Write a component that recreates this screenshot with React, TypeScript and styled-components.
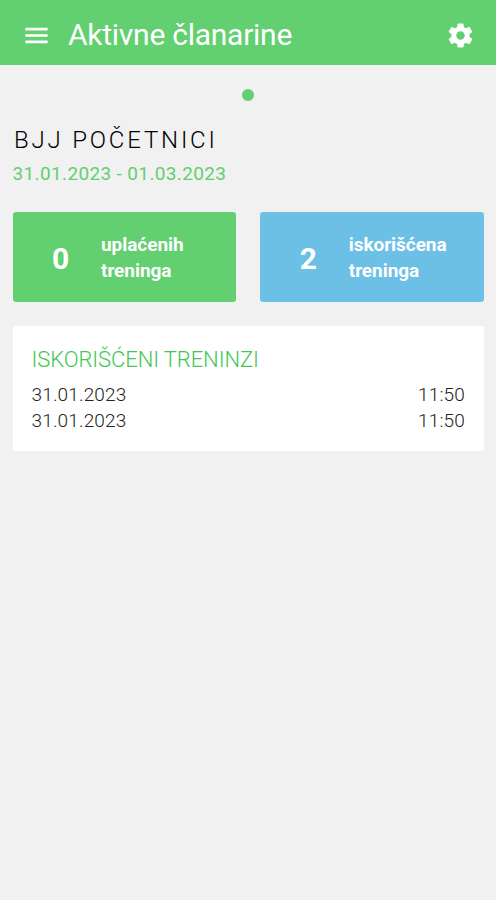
import React from "react";
import styled, { createGlobalStyle } from "styled-components";

const GlobalStyle = createGlobalStyle`
  * { box-sizing: border-box; }
  body { margin: 0; background: #f1f1f1; font-family: Roboto, sans-serif; }
`;

const Screen = styled.div`
  min-height: 900px;
  background: #f1f1f1;
`;

const Toolbar = styled.header`
  height: 65px;
  padding: 5px 21.5px 0 22px;
  display: flex;
  align-items: center;
  background: #62cf71;
  color: #fff;
`;

const Title = styled.h1`
  flex: 1;
  margin: 0 0 0 17px;
  font-size: 30px;
  font-weight: 400;
  line-height: 36px;
  letter-spacing: -0.26px;
  white-space: nowrap;
`;

const Icon = styled.svg`
  display: block;
  width: 29px;
  height: 29px;
  fill: currentColor;
`;

const Pager = styled.div`
  height: 60px;
  display: flex;
  align-items: center;
  justify-content: center;
`;

const Dot = styled.span`
  width: 12px;
  height: 12px;
  border-radius: 50%;
  background: #62cf71;
`;

const Content = styled.main`
  padding: 0 12px 0 12.5px;
`;

const Membership = styled.h2`
  margin: 0 0 0 1.5px;
  font-size: 24px;
  font-weight: 300;
  line-height: 30px;
  letter-spacing: 2.8px;
  color: #000;
`;

const Period = styled.div`
  padding-top: 1px;
  font-size: 19px;
  line-height: 35px;
  letter-spacing: 0.36px;
  color: #62cf71;
`;

const Tiles = styled.div`
  margin-top: 20.5px;
  display: grid;
  grid-template-columns: 1fr 1fr;
  column-gap: 24px;
`;

const Tile = styled.section<{ $color: string }>`
  height: 90px;
  padding: 0 0 0 36px;
  display: grid;
  grid-template-columns: 24px 1fr;
  column-gap: 28.5px;
  align-items: center;
  border-radius: 3px;
  background: ${(p) => p.$color};
  color: #fff;
  font-weight: 700;
`;

const Count = styled.span`
  text-align: center;
  font-size: 30px;
  padding-top: 3px;
`;

const Caption = styled.span`
  width: 110px;
  padding-top: 3px;
  font-size: 19px;
  line-height: 26px;
  letter-spacing: -0.05px;
`;

const Card = styled.section`
  margin-top: 24px;
  height: 125px;
  padding: 19px 19px 18px;
  border-radius: 2px;
  background: #fff;
`;

const CardTitle = styled.h3`
  margin: 0 0 7px;
  font-size: 22px;
  font-weight: 300;
  line-height: 30px;
  letter-spacing: -0.1px;
  color: #3fc653;
`;

const Visit = styled.div`
  display: flex;
  justify-content: space-between;
  font-size: 19px;
  font-weight: 300;
  line-height: 26px;
  letter-spacing: 0.15px;
  color: #222;
`;

const tiles = [
  { color: "#62cf71", count: 0, caption: "uplaćenih treninga" },
  { color: "#6cc0e6", count: 2, caption: "iskorišćena treninga" },
];

const visits = [
  { date: "31.01.2023", time: "11:50" },
  { date: "31.01.2023", time: "11:50" },
];

export default function App() {
  return (
    <Screen>
      <GlobalStyle />
      <Toolbar>
        <Icon viewBox="0 0 24 24">
          <path d="M2.8 18.4h18.4v-2.2H2.8v2.2zm0-5.3h18.4v-2.2H2.8v2.2zm0-7.5v2.2h18.4V5.6H2.8z" />
        </Icon>
        <Title>Aktivne članarine</Title>
        <Icon viewBox="0 0 24 24">
          <path d="M19.43 12.98c.04-.32.07-.64.07-.98s-.03-.66-.07-.98l2.11-1.65c.19-.15.24-.42.12-.64l-2-3.46c-.12-.22-.39-.3-.61-.22l-2.49 1c-.52-.4-1.08-.73-1.69-.98l-.38-2.65C14.46 2.18 14.25 2 14 2h-4c-.25 0-.46.18-.49.42l-.38 2.65c-.61.25-1.17.59-1.69.98l-2.49-1c-.23-.09-.49 0-.61.22l-2 3.46c-.13.22-.07.49.12.64l2.11 1.65c-.04.32-.07.65-.07.98s.03.66.07.98l-2.11 1.65c-.19.15-.24.42-.12.64l2 3.46c.12.22.39.3.61.22l2.49-1c.52.4 1.08.73 1.69.98l.38 2.65c.03.24.24.42.49.42h4c.25 0 .46-.18.49-.42l.38-2.65c.61-.25 1.17-.59 1.69-.98l2.49 1c.23.09.49 0 .61-.22l2-3.46c.12-.22.07-.49-.12-.64l-2.11-1.65zM12 15.5c-1.93 0-3.5-1.57-3.5-3.5s1.57-3.5 3.5-3.5 3.5 1.57 3.5 3.5-1.57 3.5-3.5 3.5z" />
        </Icon>
      </Toolbar>
      <Pager>
        <Dot />
      </Pager>
      <Content>
        <Membership>BJJ POČETNICI</Membership>
        <Period>31.01.2023 - 01.03.2023</Period>
        <Tiles>
          {tiles.map((t) => (
            <Tile key={t.caption} $color={t.color}>
              <Count>{t.count}</Count>
              <Caption>{t.caption}</Caption>
            </Tile>
          ))}
        </Tiles>
        <Card>
          <CardTitle>ISKORIŠĆENI TRENINZI</CardTitle>
          {visits.map((v, i) => (
            <Visit key={i}>
              <span>{v.date}</span>
              <span>{v.time}</span>
            </Visit>
          ))}
        </Card>
      </Content>
    </Screen>
  );
}
